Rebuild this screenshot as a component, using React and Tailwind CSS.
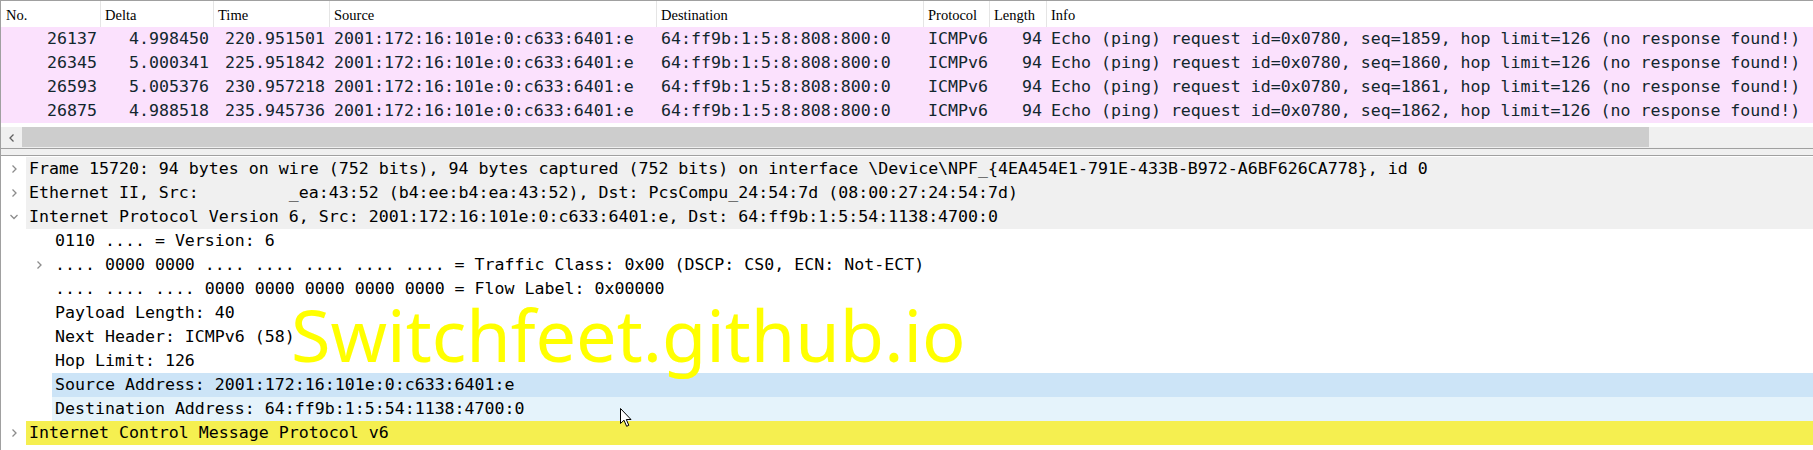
import React from 'react';

const packets = [
    { no: 26137, delta: '4.998450', time: '220.951501', seq: 1859 },
    { no: 26345, delta: '5.000341', time: '225.951842', seq: 1860 },
    { no: 26593, delta: '5.005376', time: '230.957218', seq: 1861 },
    { no: 26875, delta: '4.988518', time: '235.945736', seq: 1862 },
];

const columns = [
    { label: 'No.', w: 'w-[99px]' },
    { label: 'Delta', w: 'w-[113px]' },
    { label: 'Time', w: 'w-[116px]' },
    { label: 'Source', w: 'w-[327px]' },
    { label: 'Destination', w: 'w-[267px]' },
    { label: 'Protocol', w: 'w-[66px]' },
    { label: 'Length', w: 'w-[57px]' },
    { label: 'Info', w: 'flex-1' },
];

const details = [
    { level: 0, arrow: 'closed', bg: 'bg-[#f0f0f0]', text: 'Frame 15720: 94 bytes on wire (752 bits), 94 bytes captured (752 bits) on interface \\Device\\NPF_{4EA454E1-791E-433B-B972-A6BF626CA778}, id 0' },
    { level: 0, arrow: 'closed', bg: 'bg-[#f0f0f0]', text: 'Ethernet II, Src:         _ea:43:52 (b4:ee:b4:ea:43:52), Dst: PcsCompu_24:54:7d (08:00:27:24:54:7d)' },
    { level: 0, arrow: 'open', bg: 'bg-[#f0f0f0]', text: 'Internet Protocol Version 6, Src: 2001:172:16:101e:0:c633:6401:e, Dst: 64:ff9b:1:5:54:1138:4700:0' },
    { level: 1, text: '0110 .... = Version: 6' },
    { level: 1, arrow: 'closed', text: '.... 0000 0000 .... .... .... .... .... = Traffic Class: 0x00 (DSCP: CS0, ECN: Not-ECT)' },
    { level: 1, text: '.... .... .... 0000 0000 0000 0000 0000 = Flow Label: 0x00000' },
    { level: 1, text: 'Payload Length: 40' },
    { level: 1, text: 'Next Header: ICMPv6 (58)' },
    { level: 1, text: 'Hop Limit: 126' },
    { level: 1, bg: 'bg-[#cce4f7]', text: 'Source Address: 2001:172:16:101e:0:c633:6401:e' },
    { level: 1, bg: 'bg-[#e5f3fb]', text: 'Destination Address: 64:ff9b:1:5:54:1138:4700:0' },
    { level: 0, arrow: 'closed', bg: 'bg-[#f5ef50]', text: 'Internet Control Message Protocol v6' },
];

const mono = "font-['DejaVu_Sans_Mono',monospace] text-[16.6px] whitespace-pre";

const Chevron = ({ open }) => (
    <svg width="10" height="10" viewBox="0 0 10 10" fill="none">
        {open
            ? <polyline points="1.5,3 5,6.5 8.5,3" stroke="#8c8c8c" strokeWidth="1.3" />
            : <polyline points="3.5,1.5 7,5 3.5,8.5" stroke="#8c8c8c" strokeWidth="1.3" />}
    </svg>
);

const App = () => {
    return (
        <div className="relative w-[1813px] h-[450px] overflow-hidden bg-white border-l border-[#a0a0a0] text-black">

            {/* Packet list */}
            <div className="border-t border-[#a0a0a0]">
                <div className="flex h-[26px] font-['Liberation_Serif',serif] text-[14.5px] text-black">
                    {columns.map((c, i) => (
                        <div key={c.label} className={`${c.w} h-full flex items-center pt-[3px] pl-[4px] ${i > 0 ? 'border-l border-[#e5e5e5]' : 'pl-[5px]'}`}>
                            {c.label}
                        </div>
                    ))}
                </div>

                <div className={`${mono} text-[#12272e]`}>
                    {packets.map((p) => (
                        <div key={p.no} className="flex h-6 items-center bg-[#fbe1fd]">
                            <div className="w-[99px] text-right pr-[3px]">{p.no}</div>
                            <div className="w-[113px] text-right pr-[4px]">{p.delta}</div>
                            <div className="w-[116px] text-right pr-[4px]">{p.time}</div>
                            <div className="w-[327px] pl-[5px]">2001:172:16:101e:0:c633:6401:e</div>
                            <div className="w-[267px] pl-[5px]">64:ff9b:1:5:8:808:800:0</div>
                            <div className="w-[66px] pl-[5px]">ICMPv6</div>
                            <div className="w-[57px] text-right pr-[4px]">94</div>
                            <div className="flex-1 pl-[5px]">Echo (ping) request id=0x0780, seq={p.seq}, hop limit=126 (no response found!)</div>
                        </div>
                    ))}
                </div>

                <div className="h-1" />

                {/* horizontal scrollbar */}
                <div className="flex h-[22px] bg-[#f0f0f0] border-b border-[#a0a0a0]">
                    <div className="w-[21px] flex items-center justify-center">
                        <svg width="8" height="10" viewBox="0 0 8 10" fill="none">
                            <polyline points="5.5,1.5 2,5 5.5,8.5" stroke="#606060" strokeWidth="1.3" />
                        </svg>
                    </div>
                    <div className="w-[1627px] h-[20px] bg-[#cdcdcd]" />
                    <div className="flex-1" />
                </div>
            </div>

            {/* splitter */}
            <div className="h-[7px] bg-[#f0f0f0] border-b border-[#a0a0a0]" />

            {/* Packet details */}
            <div className={`${mono} pt-px`}>
                {details.map((d, i) => (
                    <div key={i} className="flex h-6 items-center">
                        <div className={`${d.level === 0 ? 'w-[25px]' : 'w-[50px]'} h-full flex justify-end`}>
                            <div className="w-[25px] h-full flex items-center justify-center">
                                {d.arrow && <Chevron open={d.arrow === 'open'} />}
                            </div>
                        </div>
                        <div className={`flex-1 h-full flex items-center ${d.level === 0 ? 'pl-[3px]' : 'pl-[3px] ml-px'} ${d.bg || ''}`}>
                            {d.text}
                        </div>
                    </div>
                ))}
            </div>

            {/* watermark */}
            <div className="absolute left-[290px] top-[298px] font-['Noto_Sans',sans-serif] text-[72px] leading-none text-[#ffff00] whitespace-nowrap">
                Switchfeet.github.io
            </div>

            {/* mouse pointer */}
            <svg className="absolute left-[619px] top-[408px]" width="13" height="20" viewBox="0 0 13 20">
                <path d="M0.5 0.5 L0.5 15.5 L4 12.2 L6.6 18.3 L8.8 17.3 L6.3 11.5 L11 11.5 Z" fill="#ffffff" stroke="#000000" strokeWidth="1" strokeLinejoin="round" />
            </svg>
        </div>
    );
};

export default App;
